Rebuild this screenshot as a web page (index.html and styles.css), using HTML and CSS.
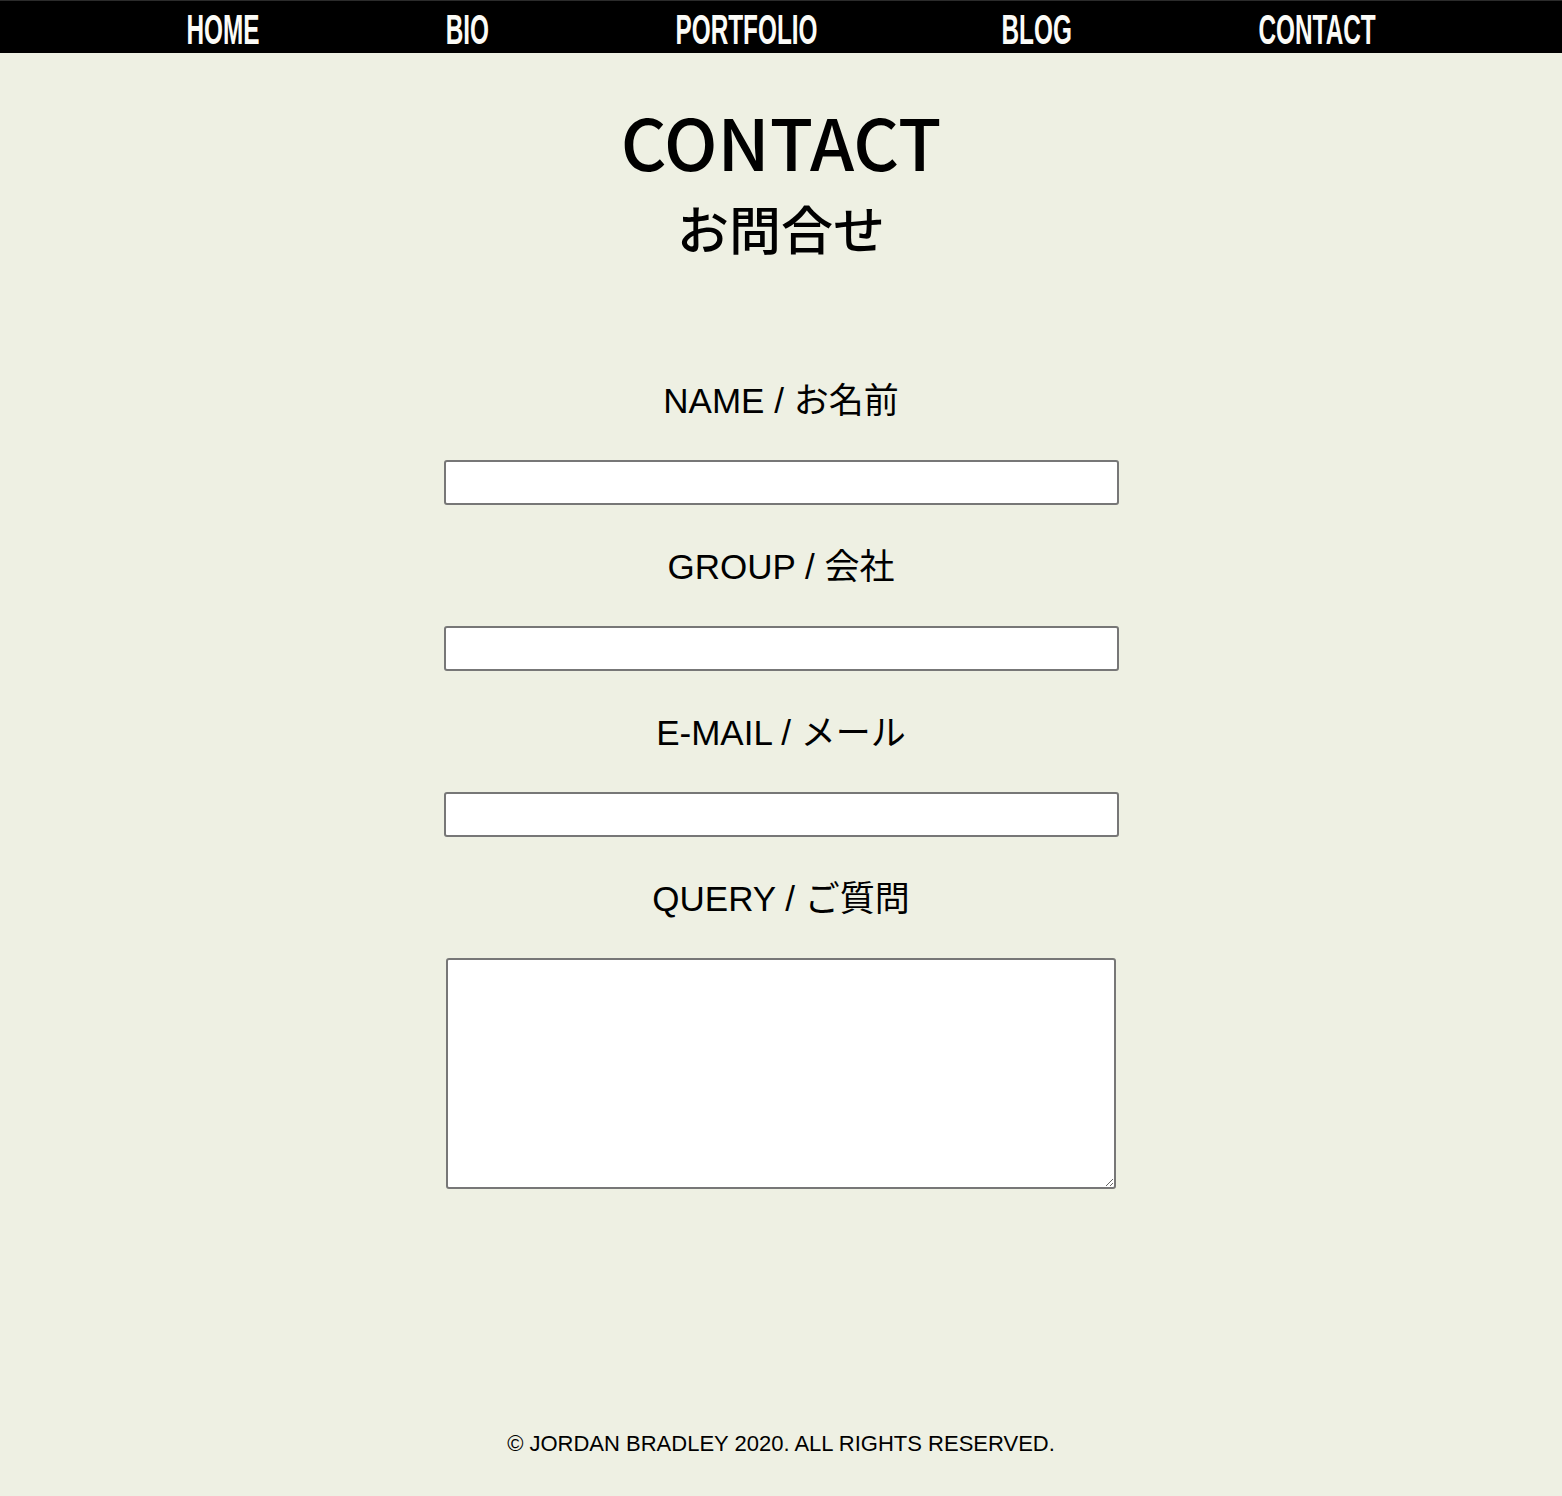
FILE: index.html
```html
<!DOCTYPE html>
<html lang="ja">
<head>
<meta charset="utf-8">
<title>Contact</title>
<link rel="stylesheet" href="styles.css">
</head>
<body>
<nav class="nav">
  <a class="nav-link nav-home" href="#"><span>HOME</span></a>
  <a class="nav-link nav-bio" href="#"><span>BIO</span></a>
  <a class="nav-link nav-portfolio" href="#"><span>PORTFOLIO</span></a>
  <a class="nav-link nav-blog" href="#"><span>BLOG</span></a>
  <a class="nav-link nav-contact" href="#"><span>CONTACT</span></a>
</nav>
<main class="main">
  <h1 class="title">CONTACT</h1>
  <h2 class="subtitle">お問合せ</h2>
  <form class="form">
    <label class="field-label" for="name">NAME / お名前</label>
    <input class="field-input" id="name" type="text">
    <label class="field-label" for="group">GROUP / 会社</label>
    <input class="field-input" id="group" type="text">
    <label class="field-label" for="email">E-MAIL / メール</label>
    <input class="field-input" id="email" type="email">
    <label class="field-label" for="query">QUERY / ご質問</label>
    <textarea class="field-textarea" id="query"></textarea>
  </form>
</main>
<footer class="footer">© JORDAN BRADLEY 2020. ALL RIGHTS RESERVED.</footer>
</body>
</html>
```
FILE: styles.css
```css
html, body {
  margin: 0;
  padding: 0;
}
body {
  background: #eef0e3;
  color: #000;
  font-family: "Liberation Sans", "Noto Sans CJK JP", sans-serif;
  min-height: 1496px;
}
.nav {
  box-sizing: border-box;
  height: 53px;
  background: #000;
  border-top: 1px solid #2b2b2b;
  padding-top: 6px;
  display: flex;
  justify-content: space-evenly;
}
.nav-link {
  display: flex;
  justify-content: center;
  color: #fbfbf7;
  text-decoration: none;
  font-family: "Liberation Sans", sans-serif;
  font-weight: bold;
  font-size: 42px;
  line-height: 46px;
  white-space: nowrap;
}
.nav-link span {
  display: inline-block;
  transform: scaleX(0.58);
}
.nav-home { width: 75px; }
.nav-bio { width: 45px; }
.nav-portfolio { width: 142px; }
.nav-blog { width: 70px; }
.nav-contact { width: 120px; }

.main {
  width: 676px;
  margin: 0 auto;
  display: flex;
  flex-direction: column;
  align-items: center;
}
.title {
  margin: 50px 0 0;
  font-family: "Noto Sans CJK JP", sans-serif;
  font-weight: 500;
  font-size: 71px;
  line-height: 75px;
}
.subtitle {
  margin: 24px 0 0;
  font-family: "Noto Sans CJK JP", sans-serif;
  font-weight: 500;
  font-size: 52px;
  line-height: 52px;
}
.form {
  width: 100%;
  margin-top: 127px;
  display: flex;
  flex-direction: column;
  align-items: center;
}
.field-label {
  font-size: 35px;
  line-height: 40px;
  font-family: "Liberation Sans", "Noto Sans CJK JP", sans-serif;
}
.field-input {
  box-sizing: border-box;
  width: 675px;
  height: 45px;
  margin: 39px 0 42px;
  border: 2px solid #777;
  border-radius: 3px;
  background: #fff;
}
.field-textarea {
  box-sizing: border-box;
  width: 670px;
  height: 231px;
  margin-top: 39px;
  border: 2px solid #777;
  border-radius: 3px;
  background: #fff;
}
.footer {
  margin-top: 242px;
  text-align: center;
  font-size: 22px;
  line-height: 26px;
}
```
